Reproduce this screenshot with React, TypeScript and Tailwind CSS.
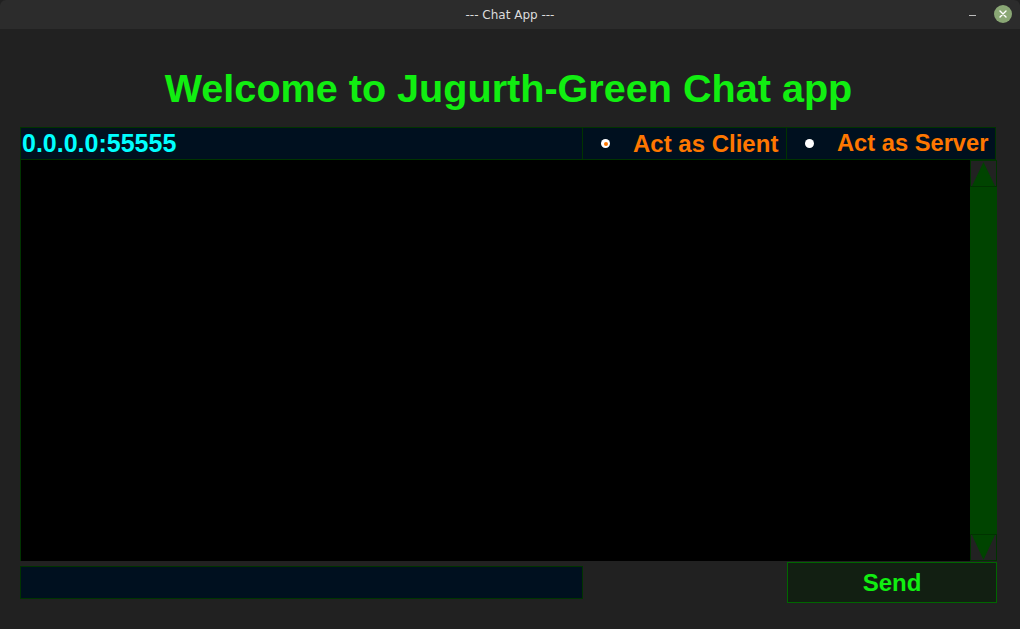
export default function App() {
  return (
    <div className="w-[1020px] h-[629px] bg-[#212121] flex flex-col overflow-hidden" style={{ fontFamily: '"Liberation Sans", Arial, sans-serif' }}>
      {/* title bar */}
      <div className="relative h-[29px] bg-[#2c2c2c] rounded-t-[6px] flex items-center justify-center shrink-0">
        <span className="text-[12px] text-[#dcdcdc]" style={{ fontFamily: '"DejaVu Sans", sans-serif' }}>--- Chat App ---</span>
        <div className="absolute right-[44px] top-[15px] w-[7px] h-[1px] bg-[#bdbdbd]" />
        <div className="absolute right-[8px] top-[5px] w-[18px] h-[18px] rounded-full bg-[#8aa775] flex items-center justify-center">
          <svg width="10" height="10" viewBox="0 0 10 10">
            <path d="M2 2 L8 8 M8 2 L2 8" stroke="#ffffff" strokeWidth="1.4" strokeLinecap="round" />
          </svg>
        </div>
      </div>

      <div className="flex flex-col pl-[20px] pr-[23px]">
        <h1 className="pt-[39px] h-[98px] text-center text-[39.6px] leading-[40px] font-bold text-[#11ee11]">
          Welcome to Jugurth-Green Chat app
        </h1>

        {/* address + role row */}
        <div className="flex h-[33px]">
          <div className="w-[563px] bg-[#00101f] border border-[#003300] flex items-center pl-[1px]">
            <span className="text-[25px] font-bold text-[#00ffff] leading-none">0.0.0.0:55555</span>
          </div>
          <div className="w-[204px] bg-[#00101f] border border-[#003300] border-l-0 flex items-center">
            <span className="ml-[18px] w-[9px] h-[9px] rounded-full bg-white flex items-center justify-center">
              <span className="w-[4px] h-[4px] rounded-full bg-[#ff7700]" />
            </span>
            <span className="ml-[23px] text-[24px] font-bold text-[#ff7700] leading-none">Act as Client</span>
          </div>
          <div className="w-[209px] bg-[#00101f] border border-[#003300] border-l-0 flex items-center">
            <span className="ml-[18px] w-[9px] h-[9px] rounded-full bg-white" />
            <span className="ml-[23px] text-[23.7px] font-bold text-[#ff7700] leading-none">Act as Server</span>
          </div>
        </div>

        {/* messages */}
        <div className="flex h-[401px]">
          <div className="flex-1 bg-black border-l border-[#003300]" />
          <div className="w-[27px] bg-[#004400] flex flex-col justify-between">
            <div className="h-[27px] bg-[#222222] border border-[#003300] flex items-end justify-center">
              <svg width="25" height="25" viewBox="0 0 25 25">
                <polygon points="12.5,1 24,25 1,25" fill="#004400" />
              </svg>
            </div>
            <div className="h-[27px] bg-[#222222] border border-[#003300] flex items-start justify-center">
              <svg width="25" height="25" viewBox="0 0 25 25">
                <polygon points="1,0 24,0 12.5,25" fill="#004400" />
              </svg>
            </div>
          </div>
        </div>

        {/* input row */}
        <div className="flex items-start">
          <div className="mt-[5px] w-[563px] h-[33px] bg-[#00101f] border border-[#003300]" />
          <button className="ml-auto mt-[1px] w-[210px] h-[41px] bg-[#121f12] border border-[#006600] text-[24px] font-bold text-[#11ee11] leading-none">
            Send
          </button>
        </div>
      </div>
    </div>
  );
}
